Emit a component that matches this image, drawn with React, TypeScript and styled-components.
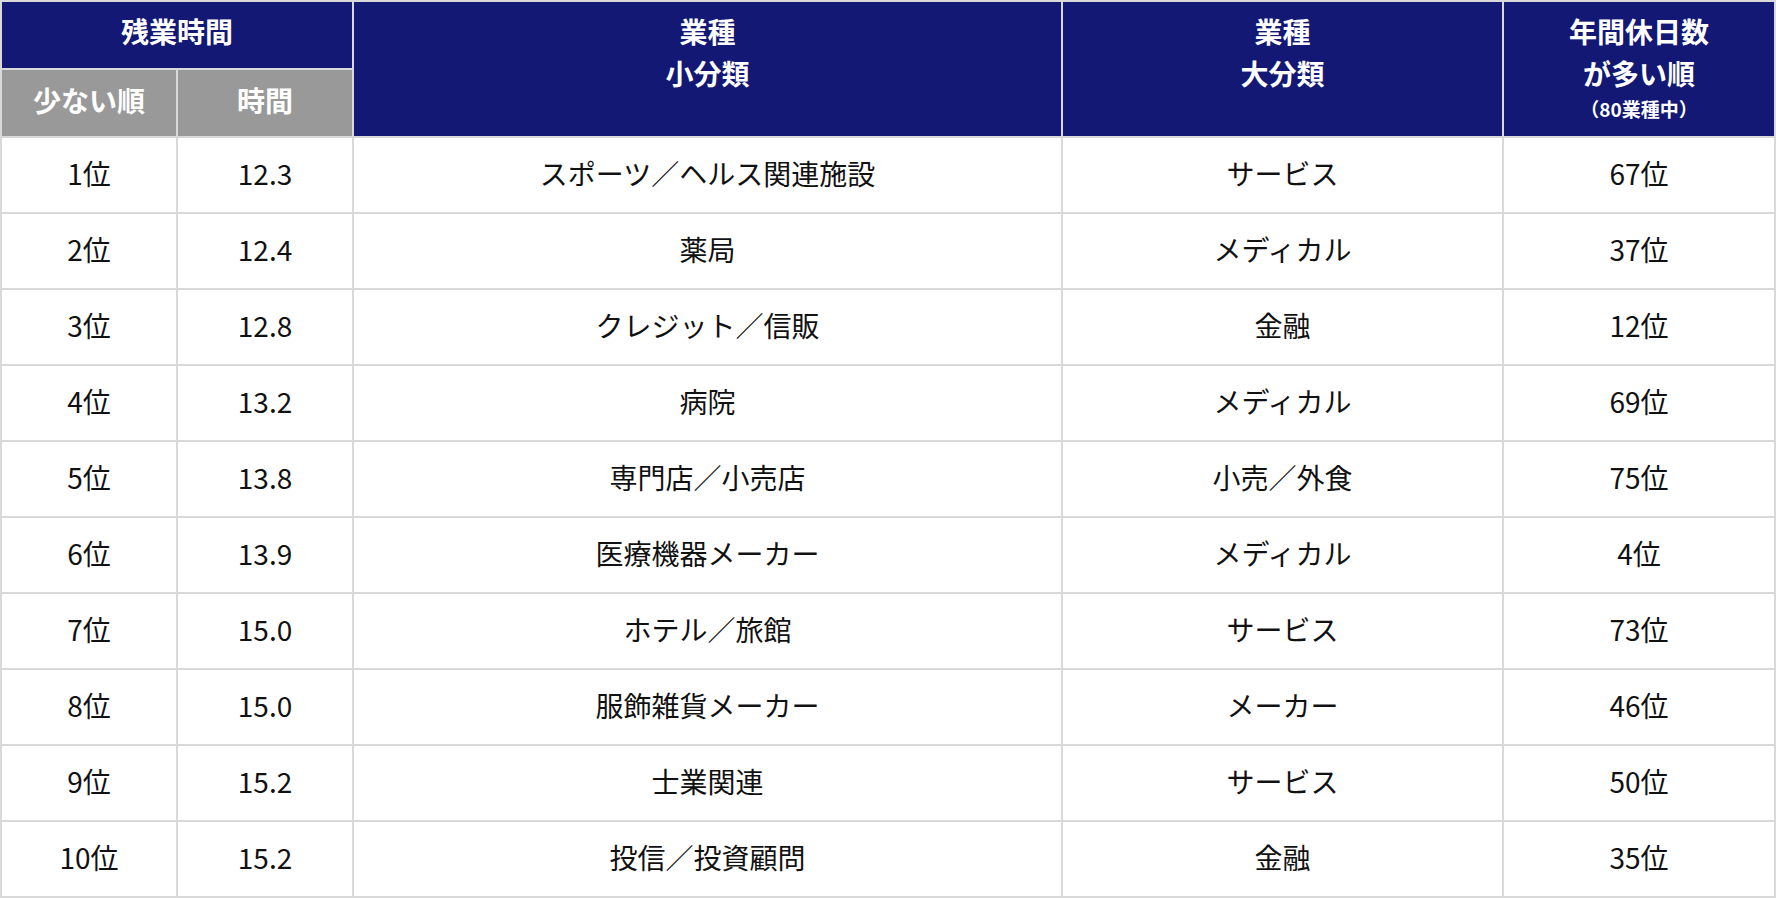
import React from 'react';
import styled, { createGlobalStyle } from 'styled-components';

const GlobalStyle = createGlobalStyle`
  html, body {
    margin: 0;
    padding: 0;
    background: #fff;
  }
  body {
    font-family: "Noto Sans CJK JP", "Noto Sans", sans-serif;
  }
`;

const Table = styled.table`
  width: 1776px;
  table-layout: fixed;
  border-collapse: separate;
  border-spacing: 2px;
  background: #d9d9d9;
  color: #111;
`;

const HeadCell = styled.th<{ $tone?: 'navy' | 'gray' }>`
  padding: 0;
  height: 66px;
  background: ${({ $tone }) => ($tone === 'gray' ? '#999999' : '#121873')};
  color: #fff;
  font-size: 28px;
  font-weight: 700;
  text-align: center;
  vertical-align: ${({ $tone }) => ($tone === 'gray' ? 'middle' : 'top')};
  line-height: 42px;
  padding-top: ${({ $tone }) => ($tone === 'gray' ? '0' : '8px')};
  padding-bottom: ${({ $tone }) => ($tone === 'gray' ? '6px' : '0')};
  box-sizing: border-box;
`;

const SmallNote = styled.span`
  display: block;
  font-size: 19px;
  line-height: 30px;
`;

const Cell = styled.td`
  padding: 0 0 4px;
  height: 74px;
  background: #fff;
  font-size: 28px;
  font-weight: 400;
  text-align: center;
  vertical-align: middle;
  line-height: 1;
  box-sizing: border-box;
`;

type Row = {
  rank: string;
  hours: string;
  small: string;
  large: string;
  holiday: string;
};

const rows: Row[] = [
  { rank: '1位', hours: '12.3', small: 'スポーツ／ヘルス関連施設', large: 'サービス', holiday: '67位' },
  { rank: '2位', hours: '12.4', small: '薬局', large: 'メディカル', holiday: '37位' },
  { rank: '3位', hours: '12.8', small: 'クレジット／信販', large: '金融', holiday: '12位' },
  { rank: '4位', hours: '13.2', small: '病院', large: 'メディカル', holiday: '69位' },
  { rank: '5位', hours: '13.8', small: '専門店／小売店', large: '小売／外食', holiday: '75位' },
  { rank: '6位', hours: '13.9', small: '医療機器メーカー', large: 'メディカル', holiday: '4位' },
  { rank: '7位', hours: '15.0', small: 'ホテル／旅館', large: 'サービス', holiday: '73位' },
  { rank: '8位', hours: '15.0', small: '服飾雑貨メーカー', large: 'メーカー', holiday: '46位' },
  { rank: '9位', hours: '15.2', small: '士業関連', large: 'サービス', holiday: '50位' },
  { rank: '10位', hours: '15.2', small: '投信／投資顧問', large: '金融', holiday: '35位' },
];

const App: React.FC = () => {
  return (
    <>
      <GlobalStyle />
      <Table>
        <colgroup>
          <col style={{ width: 174 }} />
          <col style={{ width: 174 }} />
          <col style={{ width: 707 }} />
          <col style={{ width: 439 }} />
          <col style={{ width: 270 }} />
        </colgroup>
        <thead>
          <tr>
            <HeadCell colSpan={2}>残業時間</HeadCell>
            <HeadCell rowSpan={2}>
              業種
              <br />
              小分類
            </HeadCell>
            <HeadCell rowSpan={2}>
              業種
              <br />
              大分類
            </HeadCell>
            <HeadCell rowSpan={2}>
              年間休日数
              <br />
              が多い順
              <SmallNote>（80業種中）</SmallNote>
            </HeadCell>
          </tr>
          <tr>
            <HeadCell $tone="gray">少ない順</HeadCell>
            <HeadCell $tone="gray">時間</HeadCell>
          </tr>
        </thead>
        <tbody>
          {rows.map((r) => (
            <tr key={r.rank}>
              <Cell>{r.rank}</Cell>
              <Cell>{r.hours}</Cell>
              <Cell>{r.small}</Cell>
              <Cell>{r.large}</Cell>
              <Cell>{r.holiday}</Cell>
            </tr>
          ))}
        </tbody>
      </Table>
    </>
  );
};

export default App;
